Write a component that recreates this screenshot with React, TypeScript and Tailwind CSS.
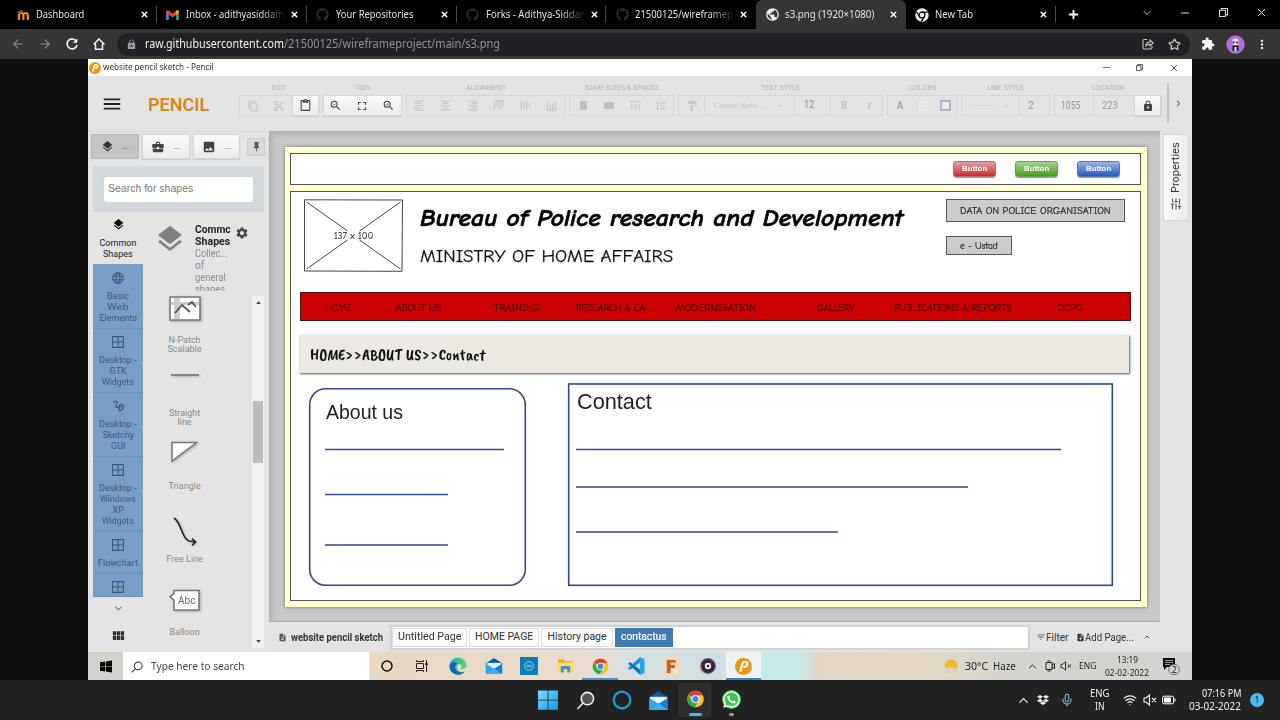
import { useLayoutEffect, useRef, useState } from "react";
import type { ReactNode } from "react";
import clsx from "clsx";
import {
  MdLayers, MdContentCopy, MdContentCut, MdContentPaste, MdZoomOut, MdZoomIn, MdFullscreen,
  MdFormatAlignLeft, MdFormatAlignCenter, MdFormatAlignRight, MdFormatLineSpacing, MdLock,
  MdBusinessCenter, MdImage, MdLanguage, MdGesture, MdSettings, MdViewModule, MdFilterList,
  MdNoteAdd, MdDescription, MdExtension, MdMoreVert, MdMenu, MdTune, MdPublic,
} from "react-icons/md";
import { FaGithub, FaDropbox, FaWhatsapp } from "react-icons/fa";
import { ArrowLeft, ArrowRight, ChevronDown, ChevronRight, ChevronUp, Mic, Minus, Plus, Star, Wifi, X } from "lucide-react";

/* Text squeezed or stretched to an exact run length. */
function Fit({ w, className, children }: { w: number; className?: string; children: ReactNode }) {
  const ref = useRef<HTMLSpanElement>(null);
  const [k, setK] = useState(1);
  useLayoutEffect(() => {
    if (ref.current) setK(w / ref.current.offsetWidth);
  }, [w]);
  return (
    <span className={clsx("block shrink-0 whitespace-nowrap", className)} style={{ width: w }}>
      <span ref={ref} className="inline-block origin-left" style={{ transform: `scaleX(${k})` }}>
        {children}
      </span>
    </span>
  );
}

function Cell({ className, children }: { className: string; children?: ReactNode }) {
  return <div className={clsx("flex shrink-0 items-center justify-center", className)}>{children}</div>;
}

/* ---------- brand marks ---------- */
const Moodle = () => (
  <svg viewBox="0 0 14 12" className="h-3 w-3.5">
    <path d="M3 11V6.5Q3 4 5.2 4T7.4 6.5V11M7.4 6.5Q7.4 4 9.6 4T11.8 6.5V11" fill="none" stroke="#f28c1b" strokeWidth="2.2" />
    <path d="M0 3.5 5 1 8 2.6 3.4 4.6Z" fill="#555" />
  </svg>
);
const Gmail = () => (
  <svg viewBox="0 0 14 11" className="h-[10px] w-[13px]">
    <path d="M0 2v9h3V4z" fill="#4285f4" />
    <path d="M11 4v7h3V2z" fill="#34a853" />
    <path d="M0 1.6Q1-.6 3 .8L7 4l4-3.2q2-1.4 3 .8V3L7 8.2 0 3z" fill="#ea4335" />
    <path d="M11 .8q2-1.4 3 .8V3l-3 2.3z" fill="#fbbc04" />
  </svg>
);
const Chrome = ({ className }: { className: string }) => (
  <svg viewBox="0 0 24 24" className={className}>
    <circle cx="12" cy="12" r="11" fill="#fbc116" />
    <path d="M12 12 2.5 6.5A11 11 0 0 1 21.6 6.8H12z" fill="#e33b2e" />
    <path d="M2.5 6.5A11 11 0 0 0 11 23l4.6-8.3L12 12 7.4 14.6z" fill="#2da94f" />
    <circle cx="12" cy="12" r="5.4" fill="#fff" />
    <circle cx="12" cy="12" r="4.1" fill="#4285f4" />
  </svg>
);
const ChromeMono = () => (
  <svg viewBox="0 0 24 24" className="size-3.5">
    <circle cx="12" cy="12" r="11.5" fill="#f1f1f1" />
    <circle cx="12" cy="12" r="5" fill="none" stroke="#000" strokeWidth="2" />
    <path d="M12 7h10M7.6 14.5 2.5 6.5M16.4 14.5 11 23" stroke="#000" strokeWidth="2" />
  </svg>
);
const Mail = ({ className }: { className: string }) => (
  <svg viewBox="0 0 20 20" className={className}>
    <path d="M1 7 10 1l9 6v11H1z" fill="#0c59a4" />
    <path d="M2 6.500h16v7H2z" fill="#e8f4fc" />
    <path d="M1 7.5 10 13l-9 6z" fill="#2aa5ee" />
    <path d="M19 7.5 10 13l9 6z" fill="#1580d8" />
    <path d="M1 19 10 12.4 19 19z" fill="#35b2f2" />
  </svg>
);
const Edge = () => (
  <svg viewBox="0 0 20 20" className="size-[18px]">
    <defs>
      <linearGradient id="edge" x1="0" y1="0" x2="1" y2="0.5">
        <stop offset="0" stopColor="#1ba5e0" />
        <stop offset="1" stopColor="#5fd65c" />
      </linearGradient>
    </defs>
    <circle cx="10" cy="10" r="9.5" fill="url(#edge)" />
    <path d="M.6 9.5C2 5 7 5 9.5 7 5.5 9 6 15 11 16.8c3 .8 5.6-.2 7-1.4A9.5 9.5 0 0 1 .6 9.5z" fill="#1166b8" />
    <path d="M10 8.2q3-1 4 2.3 0 1.8-1.5 2.5 2.7 1.8 6.8-1.5l1 3-3 1.5q-6 1.5-8-2.7-1-3 .7-5.1z" fill="#e2dccd" />
  </svg>
);
const Dell = () => (
  <svg viewBox="0 0 18 18" className="size-[18px]">
    <path d="M0 0h18v18H0z" fill="#0b7cb5" />
    <circle cx="9" cy="9" r="4.3" fill="none" stroke="#a8d6ec" strokeWidth=".9" />
    <path d="M6.5 8.3h5M6.5 9.9h5" stroke="#a8d6ec" strokeWidth=".8" />
  </svg>
);
const Folder = () => (
  <svg viewBox="0 0 18 16" className="h-4 w-[17px]">
    <path d="M1 1h6l1.5 2H17v11H1z" fill="#e8a826" />
    <path d="M1 4h16v10H1z" fill="#ffd868" />
    <path d="M4 15V9.5Q4 8 5.5 8h7Q14 8 14 9.5V15h-3v-3.5H7V15z" fill="#3c92cf" />
  </svg>
);
const VsCode = () => (
  <svg viewBox="0 0 18 18" className="size-[18px]">
    <path d="M13 0v18l4.5-2V2z" fill="#27a6f0" />
    <path d="M13 .2 1 11.2l2 1.9L13 5.4z" fill="#1b8fdc" />
    <path d="M13 17.8 1 6.8l2-1.9 10 7.7z" fill="#0f75bd" />
  </svg>
);
const FusionMark = () => (
  <svg viewBox="0 0 16 18" className="h-[17px] w-[15px]">
    <path d="M0 0h16v18H0z" fill="#f8d3b0" />
    <path d="M3 2h9.5v3H7v2.5h4.5v3H7V16H3z" fill="#b8672b" />
    <path d="M9 12h6v5H9z" fill="#fbe3cb" />
  </svg>
);
const Disc = () => (
  <svg viewBox="0 0 18 18" className="size-4">
    <circle cx="9" cy="9" r="8.2" fill="#2c2430" stroke="#6d4ba5" strokeWidth="1.4" />
    <path d="M4 16A8.3 8.3 0 0 1 1 7" fill="none" stroke="#ed6f50" strokeWidth="1.5" />
    <circle cx="9" cy="9" r="3.6" fill="#f3eef2" />
    <circle cx="9" cy="9" r="1.5" fill="#2c2430" />
    <path d="m11 8 3-5" stroke="#a04a70" strokeWidth="1" />
  </svg>
);
const PencilMark = ({ className }: { className: string }) => (
  <svg viewBox="0 0 18 18" className={className}>
    <circle cx="9" cy="9" r="9" fill="#ec930f" />
    <path d="M5.5 14.5 8 5.5q.8-1.7 3-1.5 2.5.5 2.2 2.7Q12.700 9.500 9 9.300" fill="none" stroke="#fff" strokeWidth="2.300" />
  </svg>
);
const WindowsFlat = () => (
  <svg viewBox="0 0 12 12" className="h-[13px] w-3">
    <path d="M0 1.700 5.300 1v4.700H0zM6 .9 12 0v5.700H6zM0 6.300h5.300V11L0 10.300zM6 6.300h6V12l-6-.9z" fill="#000" />
  </svg>
);
const WindowsEleven = () => (
  <svg viewBox="0 0 20 20" className="size-5">
    <defs>
      <linearGradient id="w11" x1="0" y1="0" x2="1" y2="1">
        <stop offset="0" stopColor="#6fe0fb" />
        <stop offset="1" stopColor="#1695ee" />
      </linearGradient>
    </defs>
    <path d="M0 .5h9.600v9.200H0zM10.400.5H20v9.200h-9.600zM0 10.500h9.600v9.200H0zM10.400 10.500H20v9.200h-9.600z" fill="url(#w11)" />
  </svg>
);
const Mute = ({ className }: { className: string }) => (
  <svg viewBox="0 0 14 12" className={className} fill="none" stroke="currentColor" strokeWidth="1.100">
    <path d="M1 4h2l3.500-3v10L3 8H1zM9 4l4 4M13 4 9 8" />
  </svg>
);
const Search = ({ className, fill = "none" }: { className: string; fill?: string }) => (
  <svg viewBox="0 0 20 20" className={className} stroke="currentColor" strokeWidth="1.700">
    <circle cx="12" cy="8" r="6.500" fill={fill} />
    <path d="M7.300 12.700 1.500 19" fill="none" />
  </svg>
);
const Restore = ({ className }: { className: string }) => (
  <svg viewBox="0 0 10 10" className={className} fill="none" stroke="currentColor" strokeWidth="1.200">
    <path d="M.6 2.500h6.500v6.900H.6zM2.500 2.500V.6h6.900v7H7.200" />
  </svg>
);
const Panes = () => (
  <svg viewBox="0 0 12 12" className="size-3" fill="none" stroke="#3f5a75" strokeWidth="1.100">
    <path d="M.6.6h10.800v10.800H.6zM6 .6v10.800M.6 6h10.800" />
  </svg>
);
const Squiggle = () => (
  <svg viewBox="0 0 14 14" className="size-[13px]" fill="none" stroke="currentColor" strokeWidth="1.300">
    <path d="M2 4.500Q2.500 2 4.500 2.500T5 6Q3 9.500 5.500 9T9 5.500M9 5.500Q12.500 5 12 8.500T8.500 12.500Q6.500 12 8 9.500T13.300 8" />
  </svg>
);
const Bars = ({ d }: { d: string }) => (
  <svg viewBox="0 0 12 12" className="size-[11px]" fill="none" stroke="currentColor" strokeWidth="1.200">
    <path d={d} />
  </svg>
);

/* ---------- outer browser ---------- */
type TabInfo = { icon: ReactNode; title: string; w: number; active?: boolean; fade?: boolean; sep?: boolean };
const github = <FaGithub className="size-[13px] text-[#24292e]" />;
const tabs: TabInfo[] = [
  { icon: <Moodle />, title: "Dashboard", w: 48, sep: true },
  { icon: <Gmail />, title: "Inbox - adithyasiddam", w: 98, fade: true, sep: true },
  { icon: github, title: "Your Repositories", w: 77, sep: true },
  { icon: github, title: "Forks - Adithya-Siddar", w: 98, fade: true, sep: true },
  { icon: github, title: "21500125/wireframep", w: 98, fade: true },
  { icon: <MdPublic className="size-[15px] text-[#eee]" />, title: "s3.png (1920×1080)", w: 89, active: true },
  { icon: <ChromeMono />, title: "New Tab", w: 38, sep: true },
];

function TabStrip() {
  return (
    <div className="flex h-[29px] bg-black pl-[7px] text-[10.500px] text-[#e4e4e4]">
      {tabs.map((t) => (
        <div key={t.title} className={clsx("flex w-[150px] items-center pl-[8px]", t.active && "rounded-t-[6px] bg-[#353535]")}>
          <Cell className="w-[16px]">{t.icon}</Cell>
          <div className="relative ml-[5px] w-[106px] leading-none">
            <Fit w={t.w}>{t.title}</Fit>
            {t.fade && <div className="absolute top-0 left-[74px] h-4 w-[26px] bg-linear-to-r from-transparent to-black" />}
          </div>
          <X className="-ml-[2px] size-[9px] shrink-0 text-white" strokeWidth={4} />
          {t.sep && <div className="ml-auto h-[17px] w-px bg-[#4a4a4a]" />}
        </div>
      ))}
      <Cell className="w-[34px]"><Plus className="size-[13px] text-white" strokeWidth={3.500} /></Cell>
      <div className="ml-[38px] flex pb-[4px] text-[#dcdcdc]">
        <Cell className="w-[38px]"><ChevronDown className="size-3" strokeWidth={1.800} /></Cell>
        <Cell className="w-[38px]"><Minus className="size-[12px]" strokeWidth={2} /></Cell>
        <Cell className="w-[38px]"><Restore className="size-[9px]" /></Cell>
        <Cell className="w-[38px]"><X className="size-[13px]" strokeWidth={1.800} /></Cell>
      </div>
    </div>
  );
}

function AddressBar() {
  return (
    <div className="flex h-[30px] items-center bg-[#353535] text-[#f3f3f3]">
      <Cell className="w-[36px]"><ArrowLeft className="size-[14px] text-[#8d8d8d]" /></Cell>
      <Cell className="w-[18px]"><ArrowRight className="size-[14px] text-[#8d8d8d]" /></Cell>
      <Cell className="w-[36px]">
        <svg viewBox="0 0 12 12" className="size-[12px]" fill="none" stroke="currentColor" strokeWidth="1.600">
          <path d="M10.500 3.500A5 5 0 1 0 11 7" /><path d="M11.300.5v4.300H7z" fill="currentColor" stroke="none" />
        </svg>
      </Cell>
      <Cell className="w-[17px]">
        <svg viewBox="0 0 12 12" className="size-[12px]" fill="none" stroke="currentColor" strokeWidth="1.500">
          <path d="M.5 6.500 6 1l5.500 5.500M2.500 5.500v5.700h7V5.500" />
        </svg>
      </Cell>
      <div className="ml-[10px] flex h-[23px] w-[1073px] items-center rounded-full bg-[#202124] pl-[9px]">
        <MdLock className="size-[11px] text-[#9a9ca0]" />
        <Fit w={139} className="ml-[8px] text-[12px]">raw.githubusercontent.com</Fit>
        <Fit w={216} className="text-[12px] text-[#8f9194]">/21500125/wireframeproject/main/s3.png</Fit>
        <div className="ml-auto flex text-[#c9c9c9]">
          <Cell className="w-[27px]">
            <svg viewBox="0 0 12 12" className="size-[12px]" fill="none" stroke="currentColor" strokeWidth="1.100">
              <path d="M5 1.500H2.500Q1 1.500 1 3v6.500Q1 11 2.500 11h6Q10 11 10 9.500V8M4 8q0-4 4-4V2l3.300 3L8 8V6Q5.500 6 4 8z" />
            </svg>
          </Cell>
          <Cell className="w-[27px]"><Star className="size-[13px]" strokeWidth={2.200} /></Cell>
          <div className="w-[2px]" />
        </div>
      </div>
      <Cell className="w-[36px]"><MdExtension className="size-[14px] text-white" /></Cell>
      <Cell className="w-[19px]">
        <svg viewBox="0 0 19 19" className="size-[19px]">
          <circle cx="9.500" cy="9.500" r="9.200" fill="#b26be0" />
          <circle cx="9.500" cy="6.800" r="3.500" fill="#ddd" />
          <path d="M6.500 6.500h2v1.800h-2zM10.300 6.500h2v1.800h-2zM6.500 10.500h6V16h-6z" fill="#222" />
          <path d="M8.500 12h2v4h-2z" fill="#eee" />
        </svg>
      </Cell>
      <Cell className="ml-[10px] w-[14px]"><MdMoreVert className="size-[17px]" /></Cell>
    </div>
  );
}

/* ---------- Pencil window ---------- */
function TitleBar() {
  return (
    <div className="flex h-[17px] items-center bg-white pl-[1px] text-[#333]">
      <PencilMark className="size-[12px]" />
      <Fit w={111} className="ml-[2px] text-[8.500px] leading-none text-[#333]">website pencil sketch - Pencil</Fit>
      <div className="ml-auto flex">
        <Cell className="w-[33px]"><div className="h-px w-[7px] bg-[#777]" /></Cell>
        <Cell className="w-[33px]"><Restore className="size-[7px]" /></Cell>
        <Cell className="w-[36px]"><X className="size-[10px]" strokeWidth={2.200} /></Cell>
      </div>
    </div>
  );
}

const raised = "border border-[#d6d6d6] bg-linear-to-b from-[#fafafa] to-[#ebebeb] text-[#444] shadow-[0_1px_1px_#d0d0d0]";

function Group({ label, lw, className, children }: { label: string; lw: number; className: string; children: ReactNode }) {
  return (
    <div className={clsx("flex shrink-0 flex-col items-center", className)}>
      <Fit w={lw} className="h-[8px] text-[7px] leading-[9px] text-[#b5b5b5]">{label}</Fit>
      <div className="mt-[3px] flex h-[21px] w-full border border-[#d6d6d6] text-[#c6c6c6]">{children}</div>
    </div>
  );
}

function Toolbar() {
  return (
    <div className="flex h-[55px] bg-[#e3e3e3] font-[Roboto,'Liberation_Sans',sans-serif]">
      <Cell className="w-[48px]"><MdMenu className="size-[22px] text-[#222]" /></Cell>
      <div className="flex w-[103px] items-center pt-px pl-[12px] text-[18px] font-semibold text-[#d48b16]"><Fit w={61}>PENCIL</Fit></div>
      <div className="flex gap-[4px] pt-[8px]">
        <Group label="EDIT" lw={15} className="w-[80px]">
          <Cell className="w-[26px]"><MdContentCopy className="size-[12px]" /></Cell>
          <Cell className="w-[26px]"><MdContentCut className="size-[12px]" /></Cell>
          <Cell className={clsx("-my-px w-[27px]", raised)}><MdContentPaste className="size-[13px]" /></Cell>
        </Group>
        <Group label="100%" lw={17} className="w-[79px]">
          <div className={clsx("-m-px flex w-[79px]", raised)}>
            <Cell className="w-[23px]"><MdZoomOut className="size-[13px]" /></Cell>
            <Cell className="w-[30px]"><MdFullscreen className="size-[14px]" /></Cell>
            <Cell className="w-[23px]"><MdZoomIn className="size-[13px]" /></Cell>
          </div>
        </Group>
        <Group label="ALIGNMENT" lw={40} className="w-[159px]">
          <Cell className="w-[25px]"><MdFormatAlignLeft className="size-[13px]" /></Cell>
          <Cell className="w-[27px]"><MdFormatAlignCenter className="size-[13px]" /></Cell>
          <Cell className="w-[26px]"><MdFormatAlignRight className="size-[13px]" /></Cell>
          <Cell className="w-[27px]"><Bars d="M1 1h10M1.600 1v10M4.500 1v6M7.500 1v9M10.400 1v6" /></Cell>
          <Cell className="w-[26px]"><Bars d="M1.600 1v10M4.500 3v6M7.500 1v10M10.400 3v6" /></Cell>
          <Cell className="w-[26px]"><Bars d="M1 11h10M1.600 1v10M4.500 5v6M7.500 3v8M10.400 1v10" /></Cell>
        </Group>
        <Group label="SAME SIZES & SPACES" lw={74} className="w-[105px]">
          <Cell className="w-[26px]"><div className="h-[9px] w-[7px] border-y border-[#c3c3c3] bg-[#bfbfbf]" /></Cell>
          <Cell className="w-[26px]"><div className="h-[7px] w-[10px] bg-[#bfbfbf]" /></Cell>
          <Cell className="w-[27px]"><Bars d="M0 1.500h12M2 4v7M6 4v7M10 4v7" /></Cell>
          <Cell className="w-[24px]"><MdFormatLineSpacing className="size-[12px]" /></Cell>
        </Group>
        <Group label="TEXT STYLE" lw={39} className="w-[205px]">
          <Cell className="w-[26px] border-r border-[#d6d6d6]">
            <svg viewBox="0 0 24 24" className="size-[12px]" fill="currentColor">
              <path d="M18 4V3c0-.55-.45-1-1-1H5c-.55 0-1 .45-1 1v4c0 .55.45 1 1 1h12c.55 0 1-.45 1-1V6h1v4H9v11c0 .55.45 1 1 1h2c.55 0 1-.45 1-1v-9h8V4h-3z" />
            </svg>
          </Cell>
          <div className="flex w-[90px] items-center border-r border-[#d6d6d6] pl-[7px] font-[Liberation_Serif,serif] text-[9px]">
            <Fit w={55}>'Comic Sans ...</Fit>
            <ChevronDown className="ml-[9px] size-2" strokeWidth={3} />
          </div>
          <div className="flex w-[36px] items-center border-r border-[#d6d6d6] pl-[9px] text-[11px] text-[#8b8b8b]"><Fit w={10}>12</Fit></div>
          <Cell className="w-[26px] text-[10px] font-bold">B</Cell>
          <Cell className="w-[25px] font-[Liberation_Serif,serif] text-[11px] font-bold italic">I</Cell>
        </Group>
        <Group label="COLORS" lw={27} className="w-[70px]">
          <Cell className="w-[24px] text-[10px] font-bold text-[#a9a9a9]">A</Cell>
          <Cell className="w-[22px]"><div className="size-[10px] bg-[#e9e9e9]" /></Cell>
          <Cell className="w-[23px]"><div className="size-[11px] border-2 border-[#a9b5cd] bg-[#ececec]" /></Cell>
        </Group>
        <Group label="LINE STYLE" lw={37} className="w-[89px]">
          <div className="flex w-[58px] items-center border-r border-[#d6d6d6] pl-[7px]">
            <div className="h-px w-[27px] bg-[#d6d6d6]" />
            <ChevronDown className="ml-[6px] size-2" strokeWidth={3} />
          </div>
          <Cell className="w-[22px] text-[10px] text-[#999]">2</Cell>
        </Group>
        <Group label="LOCATION" lw={33} className="w-[108px]">
          <Cell className="w-[39px] border-r border-[#d6d6d6] pr-[7px] text-[10px] text-[#999]"><Fit w={19}>1055</Fit></Cell>
          <Cell className="w-[40px] pr-[8px] text-[10px] text-[#999]"><Fit w={16}>223</Fit></Cell>
          <Cell className={clsx("-my-px w-[27px]", raised)}><MdLock className="size-[12px]" /></Cell>
        </Group>
      </div>
      <div className="mt-[7px] ml-[5px] h-[40px] w-[2px] bg-[#c2c2c2]" />
      <Cell className="w-[18px]"><ChevronRight className="size-[9px] text-[#777]" strokeWidth={3} /></Cell>
    </div>
  );
}

function Category({ icon, lines, className }: { icon: ReactNode; lines: [string, number][]; className: string }) {
  return (
    <div className={clsx("flex flex-col items-center overflow-hidden border-b border-[#6c91b5] pt-[6px] text-[9px] leading-[11px]", className)}>
      <Cell className="mb-[7px] h-[13px]">{icon}</Cell>
      {lines.map(([s, w]) => <Fit key={s} w={w}>{s}</Fit>)}
    </div>
  );
}

function ShapeItem({ drawing, lines, className }: { drawing: ReactNode; lines: [string, number][]; className?: string }) {
  return (
    <div className={clsx("flex h-[73px] shrink-0 flex-col items-center text-[9px] leading-[9px] text-[#8a8a8a]", className)}>
      <Cell className="h-[34px]">{drawing}</Cell>
      <div className="mt-[11px] flex flex-col items-center">
        {lines.map(([s, w]) => <Fit key={s} w={w}>{s}</Fit>)}
      </div>
    </div>
  );
}

const shapeSvg = "drop-shadow-[1px_1px_1px_#aaaaaa]";

function LeftPanel() {
  return (
    <div className="flex w-[181px] shrink-0 flex-col border-t border-[#dadada] bg-[#e4e4e4] pt-[2px] font-[Roboto,'Liberation_Sans',sans-serif]">
      <div className="flex h-[25px] items-center gap-[3px] pl-[3px] text-[#333]">
        <Cell className="h-full w-[48px] gap-[8px] border border-[#bababa] bg-[#c4c4c4] text-[9px]"><MdLayers className="size-[13px]" />...</Cell>
        <Cell className={clsx("h-full w-[48px] gap-[8px] text-[9px]", raised)}><MdBusinessCenter className="size-[14px]" />...</Cell>
        <Cell className={clsx("h-full w-[47px] gap-[8px] text-[9px]", raised)}><MdImage className="size-[14px]" />...</Cell>
        <Cell className="ml-[4px] h-[18px] w-[18px] border border-[#cfcfcf] bg-[#d9d9d9]">
          <svg viewBox="0 0 24 24" className="size-[11px]" fill="#555"><path d="M16 12V4h1V2H7v2h1v8l-2 2v2h5v6l1 1 1-1v-6h5v-2z" /></svg>
        </Cell>
      </div>
      <div className="mt-[7px] ml-[5px] flex h-[46px] w-[171px] items-center bg-[#d2d9dd] pl-[11px]">
        <div className="flex h-[25px] w-[149px] items-center rounded-[2px] bg-white pl-[4px] font-[Liberation_Sans,sans-serif] text-[10.500px] text-[#777] shadow-[0_0_1px_#aaa]">
          <Fit w={85}>Search for shapes</Fit>
        </div>
      </div>
      <div className="flex min-h-0 flex-1">
        <div className="ml-[5px] flex w-[50px] flex-col">
          <Category className="h-[53px] border-[#e4e4e4]! text-[#222]" icon={<MdLayers className="size-[13px] text-black" />} lines={[["Common", 37], ["Shapes", 30]]} />
          <div className="bg-[#779fc5] text-[#3f5a75]">
            <Category className="h-[65px] pt-[7px]!" icon={<MdLanguage className="size-[14px]" />} lines={[["Basic", 22], ["Web", 22], ["Elements", 37]]} />
            <Category className="h-[64px]" icon={<Panes />} lines={[["Desktop -", 38], ["GTK", 17], ["Widgets", 32]]} />
            <Category className="h-[64px]" icon={<Squiggle />} lines={[["Desktop -", 38], ["Sketchy", 31], ["GUI", 14]]} />
            <Category className="h-[74px]" icon={<Panes />} lines={[["Desktop -", 38], ["Windows", 36], ["XP", 11], ["Widgets", 32]]} />
            <Category className="h-[43px] pt-[7px]!" icon={<Panes />} lines={[["Flowchart", 40]]} />
            <Category className="h-[23px]" icon={<Panes />} lines={[]} />
          </div>
          <Cell className="h-[22px]"><ChevronDown className="size-[11px] text-[#777]" strokeWidth={2.500} /></Cell>
          <Cell className="h-[33px]"><MdViewModule className="size-[15px] text-[#333]" /></Cell>
        </div>
        <div className="ml-[4px] flex w-[105px] flex-col">
          <div className="flex h-[79px] overflow-hidden pt-[12px] pl-[7px]">
            <MdLayers className="-mt-[1px] size-[32px] shrink-0 text-[#808080]" />
            <div className="ml-[9px] w-[40px] shrink-0 text-[10px] leading-[12px] text-[#8a8a8a]">
              <Fit w={36} className="font-bold text-[#222]">Commc</Fit>
              <Fit w={35} className="font-bold text-[#222]">Shapes</Fit>
              <Fit w={33}>Collec...</Fit>
              <Fit w={9}>of</Fit>
              <Fit w={31}>general</Fit>
              <Fit w={30}>shapes</Fit>
            </div>
            <MdSettings className="mt-[2px] size-[14px] shrink-0 text-[#444]" />
          </div>
          <div className="flex w-[75px] flex-1 flex-col overflow-hidden">
            <ShapeItem lines={[["N-Patch", 32], ["Scalable", 34]]} drawing={
              <svg viewBox="0 0 32 26" className={clsx("mt-[2px] h-[26px] w-8", shapeSvg)}>
                <path d="M1 1h30v23H1z" fill="#fff" stroke="#777" strokeWidth="1.600" />
                <path d="M5 2h6v21H5zM2 6h28v3H2z" fill="#ccc" />
                <path d="m6 17 7-8 8 7M19 9l4-3 4 5" fill="none" stroke="#555" strokeWidth="1.800" />
              </svg>} />
            <ShapeItem lines={[["Straight", 31], ["line", 14]]} drawing={<svg viewBox="0 0 30 6" className={clsx("-mt-[12px] h-[6px] w-[30px]", shapeSvg)}><path d="M1 3h28" stroke="#777" strokeWidth="1.700" /></svg>} />
            <ShapeItem lines={[["Triangle", 32]]} drawing={<svg viewBox="0 0 27 22" className={clsx("-mt-[5px] h-[22px] w-[27px]", shapeSvg)}><path d="M1 1.500h24.500L1 20z" fill="#fff" stroke="#777" strokeWidth="1.500" /></svg>} />
            <ShapeItem lines={[["Free Line", 36]]} drawing={<svg viewBox="0 0 26 31" className={clsx("mt-[9px] h-[31px] w-[26px]", shapeSvg)}><path d="M2 2c8 5 7 20 15 23l6 1M20 22.500l3.500 3.500-3.500 3.500" fill="none" stroke="#222" strokeWidth="1.600" /></svg>} />
            <ShapeItem lines={[["Balloon", 30]]} drawing={
              <svg viewBox="0 0 32 24" className={clsx("mt-[2px] h-6 w-8", shapeSvg)}>
                <path d="M5 1.500h25V21H5V11L1 7.500 5 4.500z" fill="#fff" stroke="#777" strokeWidth="1.600" />
                <text x="9" y="14.500" fontSize="10" fontFamily="Roboto" fill="#666">Abc</text>
              </svg>} />
          </div>
        </div>
        <div className="mt-[84px] flex h-[352px] w-[12px] flex-col items-center bg-[#f1f1f1]">
          <Cell className="h-[13px]"><svg viewBox="0 0 6 4" className="h-[3px] w-[5px]"><path d="M0 4 3 0l3 4z" fill="#444" /></svg></Cell>
          <div className="mt-[92px] h-[62px] w-[10px] bg-[#bdbdbd]" />
          <Cell className="mt-auto h-[14px]"><svg viewBox="0 0 6 4" className="h-[3px] w-[5px]"><path d="M0 0l3 4 3-4z" fill="#444" /></svg></Cell>
        </div>
      </div>
    </div>
  );
}

const navItems: [string, number, string][] = [
  ["HOME", 26, "left-[25px]"],
  ["ABOUT US", 45, "left-[95px]"],
  ["TRAINING", 46, "left-[193px]"],
  ["RESEARCH & CA", 69, "left-[275px]"],
  ["MODERNISATION", 80, "left-[375px]"],
  ["GALLERY", 38, "left-[516px]"],
  ["PUBLICATIONS & REPORTS", 118, "left-[593px]"],
  ["DOPO", 25, "left-[757px]"],
];

const hand = "font-['Comic_Sans_MS','Comic_Neue',Lato,sans-serif]";
const webButton = "flex h-[16px] w-[43px] items-center justify-center rounded-[3px] border text-[7.500px] font-bold text-white shadow-[0_1px_1px_#999]";

/* Free drawing canvas: every shape sits where its author dropped it. */
function Artboard() {
  return (
    <div className="relative h-[460px] w-[862px] bg-[#ffffcc] shadow-[0_0_4px_#6b7770]">
      <div className="absolute top-[6px] left-[5px] flex h-[32px] w-[851px] items-center justify-end gap-[19px] border border-[#555] bg-white pr-[20px] font-[Liberation_Sans,sans-serif]">
        <div className={clsx(webButton, "border-[#b96a70] bg-linear-to-b from-[#dfa0a4] to-[#c32633]")}><Fit w={25}>Button</Fit></div>
        <div className={clsx(webButton, "border-[#6ca04f] bg-linear-to-b from-[#a5d28c] to-[#45a012]")}><Fit w={25}>Button</Fit></div>
        <div className={clsx(webButton, "border-[#5875b8] bg-linear-to-b from-[#9db4e3] to-[#2657c5]")}><Fit w={25}>Button</Fit></div>
      </div>
      <div className="absolute top-[44px] left-[5px] h-[410px] w-[851px] border border-[#555] bg-white" />

      <svg viewBox="0 0 100 73" className="absolute top-[52px] left-[18px] h-[73px] w-[101px]" fill="none" stroke="#444" strokeWidth="1">
        <path d="M1 .8 99 1 98.500 72.300 1 72z M3 3l41 29M97 3 56 32M3 70l41-29M97 70 56 41" />
      </svg>
      <Fit w={39} className={clsx("absolute top-[84px] left-[49px] text-[10px] leading-[11px] text-[#222] [-webkit-text-stroke:0.1px]", hand)}>137 x 100</Fit>
      <Fit w={483} className={clsx("absolute top-[58px] left-[135px] text-[24px] leading-[26px] font-bold text-black italic [-webkit-text-stroke:0.6px]", hand)}>Bureau of Police research and Development</Fit>
      <Fit w={253} className={clsx("absolute top-[99px] left-[134.500px] text-[18.500px] leading-[20px] text-[#111] [-webkit-text-stroke:0.25px]", hand)}>MINISTRY OF HOME AFFAIRS</Fit>

      <div className={clsx("absolute top-[52px] left-[661px] flex h-[23px] w-[179px] items-center border border-[#555] bg-[#ccc] pt-[2px] pl-[13px] text-[10px] text-[#222] [-webkit-text-stroke:0.2px]", hand)}><Fit w={151}>DATA ON POLICE ORGANISATION</Fit></div>
      <div className={clsx("absolute top-[89px] left-[661px] flex h-[19px] w-[66px] items-center border border-[#555] bg-[#ccc] pt-[2px] pl-[13px] text-[10px] text-[#222] [-webkit-text-stroke:0.2px]", hand)}><Fit w={38}>e - Ustad</Fit></div>

      <div className="absolute top-[145px] left-[15px] h-[29px] w-[831px] border border-[#541010] bg-[#cc0000]">
        {navItems.map(([s, w, at]) => (
          <Fit key={s} w={w} className={clsx("absolute top-[10px] text-[9.500px] leading-none text-[#5a0000] [-webkit-text-stroke:0.25px]", hand, at)}>{s}</Fit>
        ))}
      </div>

      <div className="absolute top-[188px] left-[14px] flex h-[38px] w-[830px] items-center bg-[#ece9e3] pl-[11px] shadow-[1px_1px_2px_#555]">
        <Fit w={175} className="mt-[2px] font-['Caveat_Brush',Lato,sans-serif] text-[16px] leading-none text-[#111]">HOME&gt;&gt;ABOUT US&gt;&gt;Contact</Fit>
      </div>

      <svg viewBox="0 0 862 460" className="absolute inset-0 h-[460px] w-[862px]" fill="none" stroke="#34478f" strokeWidth="1.600">
        <rect x="24.700" y="241.700" width="215.600" height="196.600" rx="16" />
        <rect x="283.700" y="237" width="543.600" height="201.300" />
        <path d="M40 302.500h179M40 347.500h123M40 398h123M291 302.500h485M291 340h392M291 385h262" />
      </svg>
      <Fit w={77} className="absolute top-[254px] left-[40.500px] font-[Liberation_Sans,sans-serif] text-[20px] leading-[22px] text-[#222]">About us</Fit>
      <Fit w={75} className="absolute top-[242px] left-[291.500px] font-[Liberation_Sans,sans-serif] text-[22px] leading-[25px] text-[#222]">Contact</Fit>
    </div>
  );
}

function PageBar() {
  const chip = "flex h-[19px] items-center justify-center border border-[#dcdcdc] bg-[#fafafa]";
  return (
    <div className="flex h-[31px] items-center border-t border-[#aaa] bg-[#e3e3e3] pl-[9px] font-[Roboto,'Liberation_Sans',sans-serif] text-[10.500px] text-[#333]">
      <MdDescription className="size-[9px] text-[#555]" />
      <Fit w={92} className="ml-[4px] text-[10px] font-bold">website pencil sketch</Fit>
      <div className="ml-[7px] flex h-[25px] w-[640px] items-center gap-[2px] border-2 border-[#d3d3d3] bg-white">
        <div className={clsx(chip, "w-[75px]")}><Fit w={63}>Untitled Page</Fit></div>
        <div className={clsx(chip, "w-[70px]")}><Fit w={58}>HOME PAGE</Fit></div>
        <div className={clsx(chip, "w-[72px]")}><Fit w={59}>History page</Fit></div>
        <div className="flex h-[19px] w-[58px] items-center justify-center bg-[#4179b3] text-white [-webkit-text-stroke:0.2px]"><Fit w={46}>contactus</Fit></div>
      </div>
      <MdFilterList className="ml-[6px] size-[10px] shrink-0 text-[#555]" />
      <Fit w={22} className="text-[10px]">Filter</Fit>
      <MdNoteAdd className="ml-[8px] size-[9px] shrink-0" />
      <Fit w={49} className="text-[10px]">Add Page...</Fit>
      <ChevronUp className="ml-[9px] size-[8px]" strokeWidth={2.500} />
    </div>
  );
}

const seg = "font-['Segoe_UI','Noto_Sans',sans-serif]";

function InnerTaskbar() {
  return (
    <div className={clsx("flex h-[28px] items-stretch text-[#222]", seg)}>
      <Cell className="w-[35px] bg-[#d2d1cc]"><WindowsFlat /></Cell>
      <div className="flex w-[246px] items-center bg-white pt-px pl-[8px]">
        <Search className="size-[12px] text-[#333]" />
        <Fit w={94} className="ml-[8px] text-[10.500px] text-[#444]">Type here to search</Fit>
      </div>
      <div className="flex flex-1 bg-[linear-gradient(90deg,#e5d9c4_0px,#ecdccb_200px,#d9e0df_260px,#cfe0e1_350px,#e8f0ee_380px,#c5eae9_395px,#c5eae9_430px,#e1d6c8_450px,#e5dac7_540px,#d6d4cf_640px,#d4d3d0_823px)]">
        <Cell className="w-[36px]"><svg viewBox="0 0 12 12" className="size-[12px]"><circle cx="6" cy="6" r="5" fill="none" stroke="#111" strokeWidth="1.500" /></svg></Cell>
        <Cell className="w-[33px]">
          <svg viewBox="0 0 12 12" className="size-[12px]" fill="none" stroke="#222" strokeWidth="1"><path d="M.5 0v1.500h7V0M.5 3.500h7v5h-7zM.5 12v-1.500h7V12M10.500 0v3M10.500 6v6" /><path d="M9.700 3.500h1.600V5H9.700z" fill="#222" /></svg>
        </Cell>
        <Cell className="w-[40px]"><Edge /></Cell>
        <Cell className="w-[32px]"><Mail className="size-[18px]" /></Cell>
        <Cell className="w-[38px]"><Dell /></Cell>
        <Cell className="w-[34px]"><Folder /></Cell>
        <Cell className="w-[36px] border-b-2 border-[#4a90d0] pt-[2px]"><Chrome className="size-[17px]" /></Cell>
        <Cell className="w-[35px]"><VsCode /></Cell>
        <Cell className="w-[37px]"><FusionMark /></Cell>
        <Cell className="w-[36px]"><Disc /></Cell>
        <Cell className="w-[35px] border-b-2 border-[#2f86c8] bg-[#edf2f2] pt-[2px]"><PencilMark className="size-[17px]" /></Cell>
        <div className="ml-auto flex items-center">
          <svg viewBox="0 0 16 14" className="h-[14px] w-[16px]"><circle cx="8" cy="7" r="6.500" fill="#f6b62d" /><path d="M1 10.500Q3 7 6 9q3-3 5 .5 3-.5 4.500 1.500l-2 2H3z" fill="#ddd3b8" /></svg>
          <Fit w={23} className="ml-[6px] pt-px text-[11px]">30°C</Fit>
          <Fit w={23} className="ml-[5px] pt-px text-[11px]">Haze</Fit>
          <Cell className="w-[32px]"><ChevronUp className="size-[13px]" strokeWidth={1.800} /></Cell>
          <svg viewBox="0 0 10 12" className="-ml-[3px] h-[12px] w-[10px]" fill="none" stroke="#222" strokeWidth="1"><path d="M1 2.500h6v7H1zM7 5l2.500-1.500v5L7 7M2.500 1h3M2.500 11h3" /></svg>
          <Mute className="ml-[5px] h-[10px] w-[12px]" />
          <Fit w={17} className="ml-[7px] pt-px text-[9.500px]">ENG</Fit>
          <div className="ml-[8px] flex w-[46px] flex-col items-center text-[9px] leading-[13px]">
            <Fit w={21}>13:19</Fit>
            <Fit w={44}>02-02-2022</Fit>
          </div>
          <svg viewBox="0 0 18 20" className="mr-[12px] ml-[12px] h-5 w-[18px]">
            <path d="M1 2h12v9H5l-3 3v-3H1z" fill="#111" /><path d="M3 4.500h8M3 6.500h8M3 8.500h5" stroke="#ddd" strokeWidth=".7" />
            <circle cx="12" cy="13.500" r="5.200" fill="#d9d8d5" stroke="#555" strokeWidth=".8" />
            <text x="9.800" y="16.500" fontSize="8.500" fontFamily="Noto Sans" fill="#111">2</text>
          </svg>
        </div>
      </div>
    </div>
  );
}

function PencilWindow() {
  return (
    <div className="flex w-[1104px] shrink-0 flex-col">
      <TitleBar />
      <Toolbar />
      <div className="flex h-[521px]">
        <LeftPanel />
        <div className="flex w-[891px] flex-col">
          <div className="h-[490px] border-t border-l border-[#b0b0b0] bg-[#c9c9c9] pt-[15px] pl-[15px] shadow-[inset_2px_3px_4px_#b2b2b2]"><Artboard /></div>
          <PageBar />
        </div>
        <div className="w-[32px] bg-[#e4e4e4] pt-[3px] pl-[3px]">
          <div className="flex h-[87px] w-[26px] flex-col items-center border border-[#d5d5d5] bg-linear-to-r from-[#fcfcfc] to-[#ebebeb] pt-[8px] font-[Roboto,'Liberation_Sans',sans-serif] text-[11px] leading-[12px] text-[#333]">
            <div className="flex h-[50px] w-[12px] rotate-180 [writing-mode:vertical-rl]">Properties</div>
            <MdTune className="mt-[4px] size-[14px] rotate-90 text-[#555]" />
          </div>
        </div>
      </div>
      <InnerTaskbar />
    </div>
  );
}

function OuterTaskbar() {
  return (
    <div className={clsx("flex h-[40px] items-center bg-[#222] pl-[530px] text-[11px] text-[#f4f4f4]", seg)}>
      <Cell className="w-[36px]"><WindowsEleven /></Cell>
      <Cell className="w-[38px]"><Search className="size-[19px] text-[#eee]" fill="#555" /></Cell>
      <Cell className="w-[36px]"><svg viewBox="0 0 20 20" className="size-[20px]"><circle cx="10" cy="10" r="8.300" fill="none" stroke="#1a9bd7" strokeWidth="2.200" /></svg></Cell>
      <Cell className="w-[37px]"><Mail className="size-[21px]" /></Cell>
      <div className="mx-[2px] flex h-[34px] w-[32px] flex-col items-center rounded-[3px] border border-[#333] bg-[#2d2d2d] pt-[6px]">
        <Chrome className="size-[19px]" />
        <div className="mt-[5px] h-[3px] w-[13px] rounded-full bg-[#4cb2ee]" />
      </div>
      <div className="flex w-[37px] flex-col items-center pt-[5px]">
        <Cell className="size-[19px] rounded-full bg-[#40c351]"><FaWhatsapp className="size-[19px] text-white" /></Cell>
        <div className="mt-[4px] h-[3px] w-[5px] rounded-full bg-[#999]" />
      </div>
      <div className="ml-auto flex items-center">
        <Cell className="w-[18px]"><ChevronUp className="size-[15px]" strokeWidth={1.800} /></Cell>
        <Cell className="w-[22px]"><FaDropbox className="size-[12px]" /></Cell>
        <Cell className="w-[26px]"><Mic className="size-[14px] text-[#7fc4d8]" strokeWidth={1.800} /></Cell>
        <div className="flex w-[39px] flex-col items-center text-[10.500px] leading-[13px]"><Fit w={19}>ENG</Fit><Fit w={10}>IN</Fit></div>
        <Cell className="w-[22px]"><Wifi className="size-[14px]" /></Cell>
        <Cell className="w-[18px]"><Mute className="h-[12px] w-[14px]" /></Cell>
        <Cell className="w-[20px]">
          <svg viewBox="0 0 14 10" className="h-[10px] w-[14px]"><rect x=".6" y="1.200" width="11" height="7.600" rx="1.500" fill="none" stroke="#fff" /><path d="M2 2.600h7v4.800H2zM12.500 3.500h1v3h-1z" fill="#fff" /></svg>
        </Cell>
        <div className="ml-[10px] flex w-[52px] flex-col items-end text-[10.500px] leading-[13px]"><Fit w={39}>07:16 PM</Fit><Fit w={52}>03-02-2022</Fit></div>
        <Cell className="mr-[16px] ml-[9px] size-[14px] rounded-full bg-[#4cb8f5] text-[8px] text-[#123]">1</Cell>
      </div>
    </div>
  );
}

export default function App() {
  return (
    <div className={clsx("flex h-[720px] w-[1280px] flex-col overflow-hidden bg-black", seg)}>
      <TabStrip />
      <AddressBar />
      <div className="flex h-[621px] bg-[#0e0e0e]">
        <div className="w-[88px] shrink-0" />
        <PencilWindow />
      </div>
      <OuterTaskbar />
    </div>
  );
}
